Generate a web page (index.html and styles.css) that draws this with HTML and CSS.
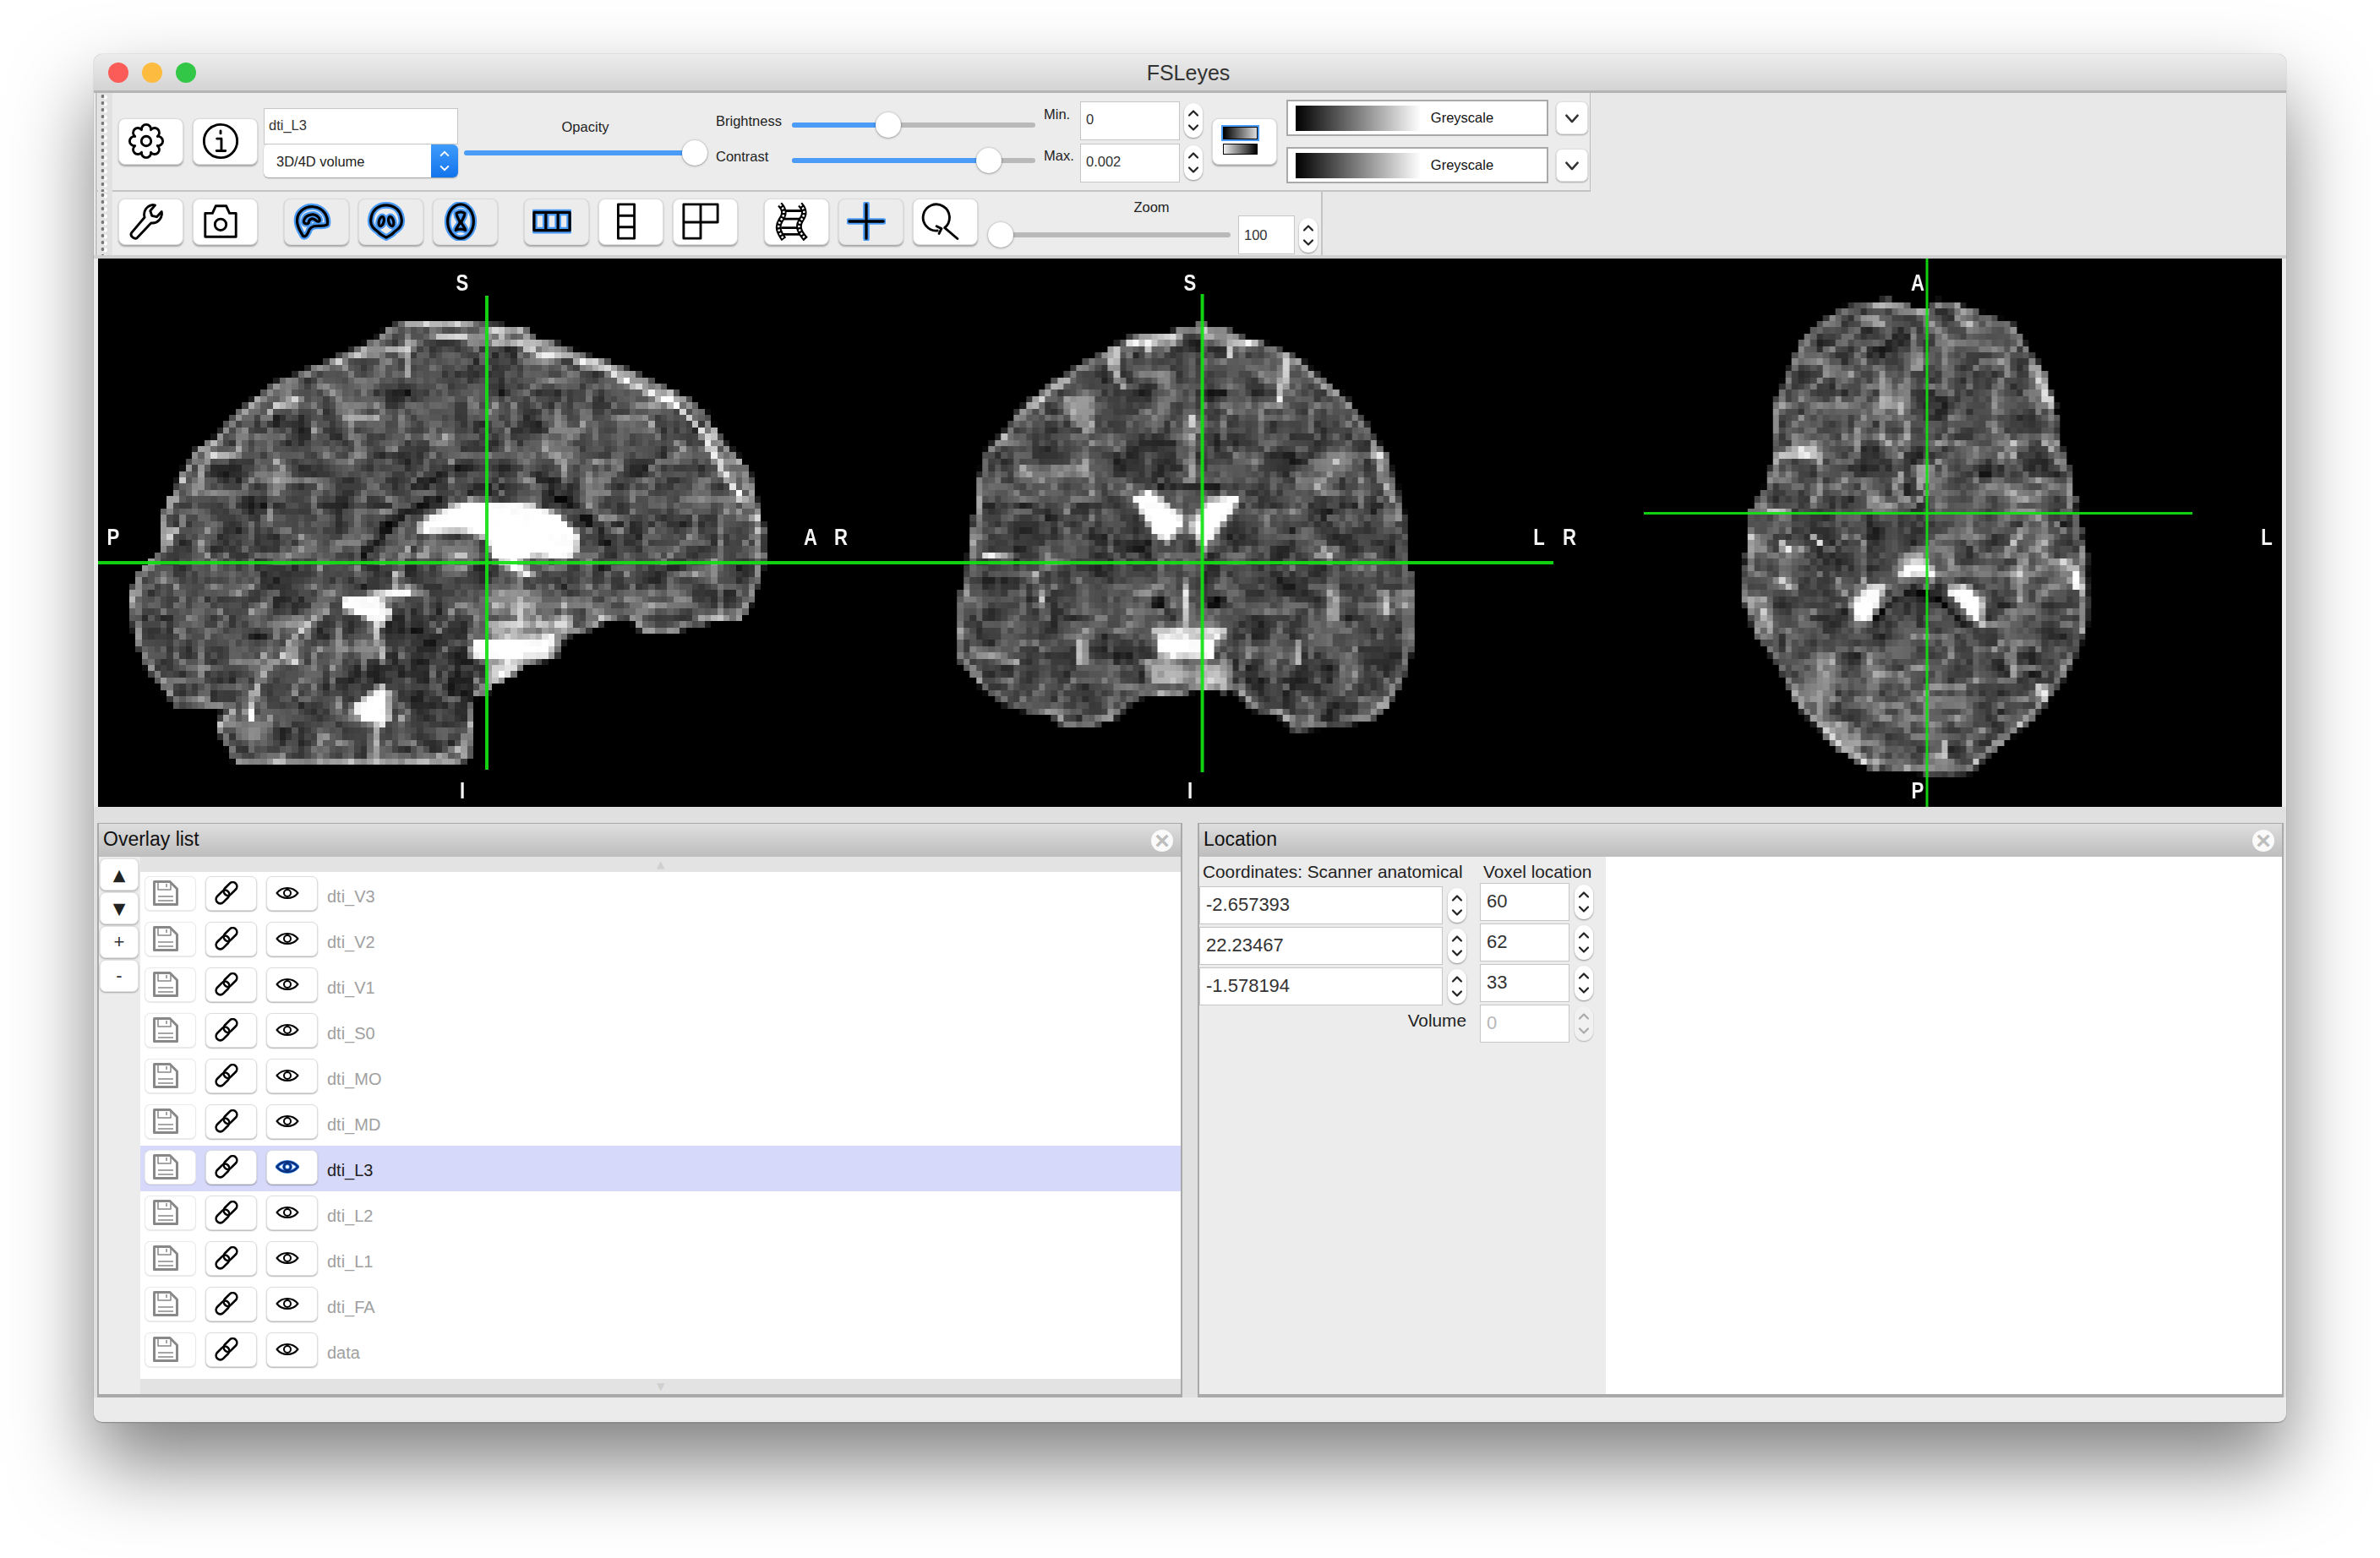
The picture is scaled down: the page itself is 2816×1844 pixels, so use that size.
FILE: index.html
```html
<!DOCTYPE html>
<html lang="en">

<head>
  <meta charset="UTF-8" />
  <title>FSLeyes</title>
  <link rel="stylesheet" href="styles.css">
</head>

<body>
  <!-- Icon sheet -->
  <svg class="sheet" xmlns="http://www.w3.org/2000/svg">
    <symbol id="i-gear" viewBox="0 0 48 48">
      <path d="M18.26 10.14 A5.8 5.8 0 1 1 29.74 10.14 A5.8 5.8 0 1 1 37.86 18.26 A5.8 5.8 0 1 1 37.86 29.74 A5.8 5.8 0 1 1 29.74 37.86 A5.8 5.8 0 1 1 18.26 37.86 A5.8 5.8 0 1 1 10.14 29.74 A5.8 5.8 0 1 1 10.14 18.26 A5.8 5.8 0 1 1 18.26 10.14 Z" />
      <circle cx="24" cy="24" r="6" />
    </symbol>
    <symbol id="i-info" viewBox="0 0 48 48">
      <circle cx="24" cy="24" r="20.5" />
      <path d="M24 11.5v3M19.5 21H25V35M19 36h11" />
    </symbol>
    <symbol id="i-wrench" viewBox="0 0 48 48">
      <path d="M6 38 L22 19 C20 12 24 5 32 3.5 L35 4 L29 11 L31 17 L37 18.5 L43 12 C44.5 20 38 27 30 26 L13 44 C10 47 3 42 6 38 Z" />
    </symbol>
    <symbol id="i-camera" viewBox="0 0 48 48">
      <path d="M5 14 H14 L18 5 H31 L35 14 H43 V43 H5 Z" />
      <circle cx="24" cy="28" r="7" />
    </symbol>
    <symbol id="i-sag" viewBox="0 0 48 48">
      <path d="M6 26 C4 12 16 5 26 6 C38 7 45 18 43 28 C36 32 26 26 21 34 C19 40 16 44 13 42 C11 38 7 33 6 26 Z" />
      <path d="M14 24 C15 16 27 12 33 20 C35 24 32 26 28 22 C24 19 20 22 20 26 C18 28 14 27 14 24 Z" />
    </symbol>
    <symbol id="i-cor" viewBox="0 0 48 48">
      <path d="M24 4 C34 4 42 10 43 22 C44 30 38 34 34 37 C32 40 28 42 24 44 C20 42 16 40 14 37 C10 34 4 30 5 22 C6 10 14 4 24 4 Z" />
      <ellipse cx="18" cy="24" rx="3" ry="6" transform="rotate(15 18 24)" />
      <ellipse cx="30" cy="24" rx="3" ry="6" transform="rotate(-15 30 24)" />
    </symbol>
    <symbol id="i-axi" viewBox="0 0 48 48">
      <ellipse cx="24" cy="24" rx="16" ry="21" />
      <path d="M19 14 C22 12 26 12 29 14 C29 20 25 22 25 25 C25 28 30 32 30 35 C26 33 22 33 18 35 C18 32 23 28 23 25 C23 22 19 20 19 14 Z" />
    </symbol>
    <symbol id="i-horz" viewBox="0 0 48 48">
      <path d="M2 13 H46 V35 H2 Z M16.500 13 V35 M31.500 13 V35" />
    </symbol>
    <symbol id="i-vert" viewBox="0 0 48 48">
      <path d="M14 3 H34 V45 H14 Z M14 17 H34 M14 31 H34" />
    </symbol>
    <symbol id="i-grid" viewBox="0 0 48 48">
      <path d="M3 3 H45 V25 H3 Z M24 3 V25 M3 25 V45 H24 V25" />
    </symbol>
    <symbol id="i-film" viewBox="0 0 48 48">
      <path d="M15 11 H37 M13 21 H36 M12 32 H33 M14 40 H36" />
      <path class="rail" d="M9 3 C16 10 15 16 10 23 C5 31 8 38 14 46 M34 3 C41 10 40 16 35 23 C30 31 34 38 41 46" />
      <path class="perf" d="M9 3 C16 10 15 16 10 23 C5 31 8 38 14 46 M34 3 C41 10 40 16 35 23 C30 31 34 38 41 46" />
    </symbol>
    <symbol id="i-plus" viewBox="0 0 48 48">
      <path d="M24 3 V45 M3 24 H45" />
    </symbol>
    <symbol id="i-zoom" viewBox="0 0 48 48">
      <path d="M29 31.8 A16.3 16.3 0 1 0 20 35.5 M19 30 L25 33 L22 39 M29 32 L44.7 45.4" />
    </symbol>
    <symbol id="i-save" viewBox="0 0 30 30">
      <path d="M1.500 1.500 H20 L28.500 10 V28.500 H1.500 Z" />
      <path class="thin" d="M6 2 V11 H21 V3 M16 4 V8 M6 19 H24 M6 24 H24" />
    </symbol>
    <symbol id="i-link" viewBox="0 0 28 28">
      <rect x="9.500" y="4" width="18" height="10" rx="5" transform="rotate(-45 18.500 9)" />
      <rect x="0.500" y="13.500" width="18" height="10" rx="5" transform="rotate(-45 9.500 18.500)" />
    </symbol>
    <symbol id="i-eye" viewBox="0 0 28 18">
      <path d="M1.500 9 C8 1 20 1 26.500 9 C20 17 8 17 1.500 9 Z" />
      <circle cx="14" cy="9" r="4" />
    </symbol>
    <symbol id="i-spin" viewBox="0 0 22 40">
      <path d="M6 14 L11 9 L16 14 M6 26 L11 31 L16 26" />
    </symbol>
    <symbol id="i-down" viewBox="0 0 24 24">
      <path d="M4 8 L12 17 L20 8" />
    </symbol>
  </svg>

  <div class="window">
    <header class="titlebar">
      <div class="lights">
        <span class="light red"></span>
        <span class="light amber"></span>
        <span class="light green"></span>
      </div>
      <div class="title">FSLeyes</div>
    </header>

    <div class="toolbars">
      <!-- Overlay display toolbar -->
      <div class="toolbar tb-display">
        <div class="grip"></div>
        <button class="tool first"><svg class="ico"><use href="#i-gear" /></svg></button>
        <button class="tool"><svg class="ico"><use href="#i-info" /></svg></button>
        <div class="name-col">
          <div class="field name">dti_L3</div>
          <div class="select">
            <span>3D/4D volume</span>
            <span class="select-arrows"><svg><use href="#i-spin" /></svg></span>
          </div>
        </div>
        <div class="opacity">
          <div class="caption">Opacity</div>
          <div class="slider w-opacity">
            <div class="track"><div class="fill" style="width: 100%"></div></div>
            <div class="thumb" style="left: 100%"></div>
          </div>
        </div>
        <div class="ranges">
          <div class="rlabel up">Brightness</div>
          <div class="slider lower1">
            <div class="track"><div class="fill" style="width: 39.6%"></div></div>
            <div class="thumb" style="left: 39.6%"></div>
          </div>
          <div class="rlabel minmax up2">Min.</div>
          <div class="field num">0</div>
          <div class="spin"><svg><use href="#i-spin" /></svg></div>

          <div class="rlabel dn">Contrast</div>
          <div class="slider raise1">
            <div class="track"><div class="fill" style="width: 81%"></div></div>
            <div class="thumb" style="left: 81%"></div>
          </div>
          <div class="rlabel minmax dn2">Max.</div>
          <div class="field num">0.002</div>
          <div class="spin"><svg><use href="#i-spin" /></svg></div>
        </div>
        <button class="tool invert">
          <span class="inv inv-a"></span>
          <span class="inv inv-b"></span>
        </button>
        <div class="cmaps">
          <div class="cmap"><span class="ramp"></span><span class="cmap-name">Greyscale</span></div>
          <div class="cmap"><span class="ramp"></span><span class="cmap-name">Greyscale</span></div>
        </div>
        <div class="drops">
          <button class="drop"><svg><use href="#i-down" /></svg></button>
          <button class="drop"><svg><use href="#i-down" /></svg></button>
        </div>
      </div>

      <!-- Ortho toolbar -->
      <div class="toolbar tb-ortho">
        <div class="grip"></div>
        <button class="tool first"><svg class="ico"><use href="#i-wrench" /></svg></button>
        <button class="tool"><svg class="ico"><use href="#i-camera" /></svg></button>
        <button class="tool on split"><svg class="ico glow"><use class="halo" href="#i-sag" /><use href="#i-sag" /></svg></button>
        <button class="tool on"><svg class="ico glow"><use class="halo" href="#i-cor" /><use href="#i-cor" /></svg></button>
        <button class="tool on"><svg class="ico glow"><use class="halo" href="#i-axi" /><use href="#i-axi" /></svg></button>
        <button class="tool on split"><svg class="ico glow"><use class="halo" href="#i-horz" /><use href="#i-horz" /></svg></button>
        <button class="tool"><svg class="ico"><use href="#i-vert" /></svg></button>
        <button class="tool"><svg class="ico"><use href="#i-grid" /></svg></button>
        <button class="tool split"><svg class="ico"><use href="#i-film" /></svg></button>
        <button class="tool on"><svg class="ico glow"><use class="halo" href="#i-plus" /><use href="#i-plus" /></svg></button>
        <button class="tool"><svg class="ico"><use href="#i-zoom" /></svg></button>
        <div class="zoom">
          <div class="caption">Zoom</div>
          <div class="zoom-row">
            <div class="slider w-zoom">
              <div class="track"></div>
              <div class="thumb" style="left: 0%"></div>
            </div>
            <div class="field zoom-val">100</div>
            <div class="spin"><svg><use href="#i-spin" /></svg></div>
          </div>
        </div>
      </div>
    </div>

    <!-- Ortho canvases -->
    <div class="ortho">
      <div class="view">
        <canvas id="sag" width="861" height="649"></canvas>
        <span class="lab lab-top">S</span>
        <span class="lab lab-bottom">I</span>
        <span class="lab lab-left">P</span>
        <span class="lab lab-right">A</span>
      </div>
      <div class="view">
        <canvas id="cor" width="861" height="649"></canvas>
        <span class="lab lab-top">S</span>
        <span class="lab lab-bottom">I</span>
        <span class="lab lab-left">R</span>
        <span class="lab lab-right">L</span>
      </div>
      <div class="view">
        <canvas id="axi" width="862" height="649"></canvas>
        <span class="lab lab-top">A</span>
        <span class="lab lab-bottom">P</span>
        <span class="lab lab-left">R</span>
        <span class="lab lab-right">L</span>
      </div>
    </div>

    <div class="panels">
      <section class="panel overlay-panel">
        <div class="panel-head"><span>Overlay list</span><span class="close">×</span></div>
        <div class="panel-body">
          <div class="list-side">
            <button class="side-btn arrow">▲</button>
            <button class="side-btn arrow">▼</button>
            <button class="side-btn">+</button>
            <button class="side-btn">-</button>
          </div>
          <div class="list">
            <div class="scroller">▲</div>
            <div class="rows">
              <div class="row">
                <button class="rb off"><svg class="save"><use href="#i-save" /></svg></button>
                <button class="rb"><svg class="link"><use href="#i-link" /></svg></button>
                <button class="rb"><svg class="eye"><use href="#i-eye" /></svg></button>
                <span class="row-name">dti_V3</span>
              </div>
              <div class="row">
                <button class="rb off"><svg class="save"><use href="#i-save" /></svg></button>
                <button class="rb"><svg class="link"><use href="#i-link" /></svg></button>
                <button class="rb"><svg class="eye"><use href="#i-eye" /></svg></button>
                <span class="row-name">dti_V2</span>
              </div>
              <div class="row">
                <button class="rb off"><svg class="save"><use href="#i-save" /></svg></button>
                <button class="rb"><svg class="link"><use href="#i-link" /></svg></button>
                <button class="rb"><svg class="eye"><use href="#i-eye" /></svg></button>
                <span class="row-name">dti_V1</span>
              </div>
              <div class="row">
                <button class="rb off"><svg class="save"><use href="#i-save" /></svg></button>
                <button class="rb"><svg class="link"><use href="#i-link" /></svg></button>
                <button class="rb"><svg class="eye"><use href="#i-eye" /></svg></button>
                <span class="row-name">dti_S0</span>
              </div>
              <div class="row">
                <button class="rb off"><svg class="save"><use href="#i-save" /></svg></button>
                <button class="rb"><svg class="link"><use href="#i-link" /></svg></button>
                <button class="rb"><svg class="eye"><use href="#i-eye" /></svg></button>
                <span class="row-name">dti_MO</span>
              </div>
              <div class="row">
                <button class="rb off"><svg class="save"><use href="#i-save" /></svg></button>
                <button class="rb"><svg class="link"><use href="#i-link" /></svg></button>
                <button class="rb"><svg class="eye"><use href="#i-eye" /></svg></button>
                <span class="row-name">dti_MD</span>
              </div>
              <div class="row selected">
                <button class="rb off"><svg class="save"><use href="#i-save" /></svg></button>
                <button class="rb"><svg class="link"><use href="#i-link" /></svg></button>
                <button class="rb"><svg class="eye glow"><use class="halo" href="#i-eye" /><use href="#i-eye" /></svg></button>
                <span class="row-name">dti_L3</span>
              </div>
              <div class="row">
                <button class="rb off"><svg class="save"><use href="#i-save" /></svg></button>
                <button class="rb"><svg class="link"><use href="#i-link" /></svg></button>
                <button class="rb"><svg class="eye"><use href="#i-eye" /></svg></button>
                <span class="row-name">dti_L2</span>
              </div>
              <div class="row">
                <button class="rb off"><svg class="save"><use href="#i-save" /></svg></button>
                <button class="rb"><svg class="link"><use href="#i-link" /></svg></button>
                <button class="rb"><svg class="eye"><use href="#i-eye" /></svg></button>
                <span class="row-name">dti_L1</span>
              </div>
              <div class="row">
                <button class="rb off"><svg class="save"><use href="#i-save" /></svg></button>
                <button class="rb"><svg class="link"><use href="#i-link" /></svg></button>
                <button class="rb"><svg class="eye"><use href="#i-eye" /></svg></button>
                <span class="row-name">dti_FA</span>
              </div>
              <div class="row">
                <button class="rb off"><svg class="save"><use href="#i-save" /></svg></button>
                <button class="rb"><svg class="link"><use href="#i-link" /></svg></button>
                <button class="rb"><svg class="eye"><use href="#i-eye" /></svg></button>
                <span class="row-name">data</span>
              </div>
            </div>
            <div class="scroller">▼</div>
          </div>
        </div>
      </section>

      <section class="panel location-panel">
        <div class="panel-head"><span>Location</span><span class="close">×</span></div>
        <div class="panel-body">
          <div class="loc-form">
            <div class="loc-world">
              <div class="loc-label">Coordinates: Scanner anatomical</div>
              <div class="loc-row"><div class="field wide">-2.657393</div><div class="spin"><svg><use href="#i-spin" /></svg></div></div>
              <div class="loc-row"><div class="field wide">22.23467</div><div class="spin"><svg><use href="#i-spin" /></svg></div></div>
              <div class="loc-row"><div class="field wide">-1.578194</div><div class="spin"><svg><use href="#i-spin" /></svg></div></div>
              <div class="loc-volume">Volume</div>
            </div>
            <div class="loc-voxel">
              <div class="loc-label">Voxel location</div>
              <div class="loc-row"><div class="field short">60</div><div class="spin"><svg><use href="#i-spin" /></svg></div></div>
              <div class="loc-row"><div class="field short">62</div><div class="spin"><svg><use href="#i-spin" /></svg></div></div>
              <div class="loc-row"><div class="field short">33</div><div class="spin"><svg><use href="#i-spin" /></svg></div></div>
              <div class="loc-row muted"><div class="field short">0</div><div class="spin"><svg><use href="#i-spin" /></svg></div></div>
            </div>
          </div>
        </div>
      </section>
    </div>

    <div class="statusbar"></div>
  </div>

  <script src="brain.js"></script>
</body>

</html>
```

FILE: styles.css
```css
* {
  margin: 0;
  padding: 0;
  box-sizing: border-box;
}

body {
  background: #fff;
  font-family: "Liberation Sans", Arial, sans-serif;
  color: #222;
  padding: 64px 111px;
  width: 2816px;
  height: 1844px;
  overflow: hidden;
}

button {
  font-family: inherit;
  cursor: pointer;
}

.sheet {
  position: absolute;
  width: 0;
  height: 0;
}

.window {
  width: 2594px;
  height: 1620px;
  display: flex;
  flex-direction: column;
  background: #ececec;
  border-radius: 10px;
  box-shadow:
    0 0 1px rgba(0, 0, 0, 0.6),
    0 48px 95px rgba(0, 0, 0, 0.5);
}

/* Title bar */
.titlebar {
  height: 46px;
  display: grid;
  grid-template-columns: 1fr auto 1fr;
  align-items: center;
  background: linear-gradient(#ececec, #d4d4d4);
  border-bottom: 3px solid #b4b4b4;
  border-radius: 10px 10px 0 0;
}

.lights {
  display: flex;
  gap: 16px;
  padding-left: 17px;
}

.light {
  width: 24px;
  height: 24px;
  border-radius: 50%;
}

.red { background: #fc5c57; }
.amber { background: #fdbc3f; }
.green { background: #33c748; }

.title {
  font-size: 25px;
  color: #333;
  padding-top: 2px;
  margin-left: -4px;
}

/* Toolbars */
.toolbars {
  height: 196px;
  padding-left: 2px;
  background: #e8e8e8;
  border-bottom: 4px solid #cfcfcf;
}

.toolbar {
  display: flex;
  align-items: center;
  background: #ececec;
  padding-left: 1px;
  border-left: 2px solid #c4c4c4;
}

.tb-display {
  width: 1769px;
  height: 115px;
  margin-bottom: 2px;
  border-right: 1px solid #bbb;
  box-shadow: 0 2px 0 #c4c4c4;
}

.tb-ortho {
  width: 1452px;
  height: 75px;
  border-right: 2px solid #c4c4c4;
  padding-bottom: 4px;
}

.grip {
  width: 17px;
  align-self: stretch;
  margin-bottom: -4px;
  background-color: #e2e2e2;
  background-image:
    radial-gradient(#777 1.5px, transparent 2.2px),
    radial-gradient(#fff 2px, transparent 2.6px);
  background-size: 7px 8px, 7px 8px;
  background-position: 2px 8px, 5px 9px;
  background-repeat: repeat-y;
}

.tool {
  width: 77px;
  height: 55px;
  display: flex;
  align-items: center;
  justify-content: center;
  padding: 0 11px 2px 0;
  background: #fff;
  border: 1px solid #dcdcdc;
  border-radius: 8px;
  box-shadow: 0 1.5px 2px rgba(0, 0, 0, 0.3);
  margin-left: 11px;
  flex: none;
}

.tool.first {
  margin-left: 7px;
}

.tool.on {
  background: #ececec;
}

.tool.split {
  margin-left: 31px;
}

.ico {
  width: 46px;
  height: 46px;
  fill: none;
  stroke: #000;
  stroke-width: 3;
  stroke-linejoin: round;
  stroke-linecap: round;
  flex: none;
}

.glow {
  stroke-width: 3.4;
}

.halo {
  stroke: #4a9bf6;
  stroke-width: 8;
}

.rail {
  stroke-width: 7;
  stroke-linecap: butt;
}

.perf {
  stroke: #fff;
  stroke-width: 2.6;
  stroke-dasharray: 2.4 2.4;
  stroke-linecap: butt;
}

.field {
  display: flex;
  align-items: center;
  background: #fff;
  border: 1.5px solid #c6c6c6;
  color: #333;
}

.name-col {
  width: 230px;
  margin-left: 7px;
  flex: none;
  padding-top: 2px;
}

.name {
  height: 43px;
  font-size: 16.5px;
  padding-left: 5px;
  padding-bottom: 2px;
}

.select {
  height: 39px;
  display: flex;
  align-items: center;
  justify-content: space-between;
  background: #fff;
  border-radius: 6px;
  box-shadow: 0 1px 1.5px rgba(0, 0, 0, 0.35);
  font-size: 16.5px;
  padding: 2px 0 0 15px;
  overflow: hidden;
}

.select-arrows {
  width: 32px;
  height: 39px;
  margin-top: -2px;
  background: linear-gradient(#3f9cfb, #1273ec);
}

.select-arrows svg {
  width: 32px;
  height: 39px;
  fill: none;
  stroke: #fff;
  stroke-width: 2;
}

.caption {
  font-size: 16.5px;
  line-height: 20px;
  text-align: center;
  color: #222;
}

.opacity {
  width: 273px;
  margin-left: 7px;
  flex: none;
  display: flex;
  flex-direction: column;
  gap: 6px;
}

.opacity .caption {
  padding-left: 14px;
}

.slider {
  position: relative;
  height: 30px;
}

.track {
  position: absolute;
  top: 12px;
  left: 0;
  right: 0;
  height: 6px;
  border-radius: 3px;
  background: #b9b9b9;
  overflow: hidden;
}

.fill {
  height: 100%;
  background: #4a9cf8;
}

.thumb {
  position: absolute;
  top: 0;
  width: 30px;
  height: 30px;
  margin-left: -15px;
  border-radius: 50%;
  background: #fff;
  box-shadow: 0 0.5px 2.5px rgba(0, 0, 0, 0.5);
}

.ranges {
  display: grid;
  grid-template-columns: 90px 288px 53px 118px 29px;
  grid-template-rows: 46px 46px;
  row-gap: 4px;
  margin-left: 25px;
  flex: none;
  align-items: center;
}

.rlabel {
  font-size: 16.5px;
  line-height: 20px;
}

.rlabel.dn {
  margin-top: -16px;
}

.rlabel.up2 {
  margin-top: -16px;
}

.rlabel.dn2 {
  margin-top: -18px;
}

.minmax {
  padding-left: 10px;
}

.lower1 {
  margin-top: 10px;
}

.raise1 {
  margin-top: -6px;
}

.num {
  height: 46px;
  font-size: 16.5px;
  padding-left: 6px;
  padding-bottom: 2px;
  align-self: stretch;
}

.spin {
  width: 22px;
  height: 41px;
  margin-left: 5px;
  background: #fff;
  border-radius: 11px;
  box-shadow: 0 1px 2px rgba(0, 0, 0, 0.4);
  flex: none;
}

.spin svg {
  display: block;
  width: 22px;
  height: 41px;
  fill: none;
  stroke: #222;
  stroke-width: 2.2;
  stroke-linecap: round;
  stroke-linejoin: round;
}

.invert {
  margin-left: 9px;
  flex-direction: column;
  gap: 5px;
}

.inv {
  display: block;
  width: 41px;
}

.inv-a {
  height: 15px;
  background: linear-gradient(90deg, #000, #ddd);
  border: 1px solid #000;
  outline: 2px solid #4a9bf6;
}

.inv-b {
  height: 13px;
  background: linear-gradient(90deg, #eee, #000);
  border: 1px solid #000;
}

.cmaps {
  width: 310px;
  margin-left: 11px;
  flex: none;
  display: flex;
  flex-direction: column;
  gap: 13px;
}

.cmap {
  height: 43px;
  display: flex;
  align-items: center;
  background: #fff;
  border: 2px solid #a9a9a9;
  padding-left: 9px;
}

.ramp {
  width: 148px;
  height: 30px;
  background: linear-gradient(90deg, #000, #fff);
  flex: none;
}

.cmap-name {
  flex: 1;
  text-align: center;
  font-size: 16.5px;
  color: #111;
  padding-right: 51px;
}

.drops {
  margin-left: 9px;
  flex: none;
  display: flex;
  flex-direction: column;
  gap: 17px;
}

.drop {
  width: 38px;
  height: 39px;
  display: flex;
  align-items: center;
  justify-content: center;
  background: #fff;
  border: 1px solid #e0e0e0;
  border-radius: 7px;
  box-shadow: 0 1px 2px rgba(0, 0, 0, 0.3);
}

.drop svg {
  width: 20px;
  height: 20px;
  fill: none;
  stroke: #333;
  stroke-width: 3;
  stroke-linecap: round;
  stroke-linejoin: round;
}

.zoom {
  margin-left: 12px;
  width: 391px;
  flex: none;
  align-self: stretch;
  padding-top: 8px;
}

.zoom .caption {
  padding-right: 4px;
}

.zoom-row {
  display: flex;
  align-items: center;
}

.w-zoom {
  width: 272px;
  margin-left: 15px;
  margin-right: 9px;
  flex: none;
}

.zoom-val {
  width: 67px;
  height: 46px;
  font-size: 16.5px;
  padding-left: 6px;
  flex: none;
}

/* Ortho canvases */
.ortho {
  height: 649px;
  display: flex;
  margin: 0 5px;
  background: #000;
}

.view {
  position: relative;
  flex: 1;
}

.view canvas {
  display: block;
  width: 100%;
  height: 100%;
}

.lab {
  position: absolute;
  font-size: 27px;
  font-weight: bold;
  line-height: 30px;
  color: #f4f4f4;
  transform: translate(-50%, -50%) scaleX(0.82);
}

.lab-top { left: 50%; top: 29px; }
.lab-bottom { left: 50%; top: 630px; }
.lab-left { left: 18px; top: 330px; }
.lab-right { left: calc(100% - 18px); top: 330px; }

/* Bottom panels */
.panels {
  height: 699px;
  display: flex;
  gap: 18px;
  padding: 19px 3px 0 4px;
  background: #e0e0e0;
}

.panel {
  display: flex;
  flex-direction: column;
  border: 2px solid #a9a9a9;
  border-top-width: 1px;
  border-bottom-width: 4px;
  background: #ececec;
}

.overlay-panel {
  width: 1284px;
  flex: none;
}

.location-panel {
  flex: 1;
}

.panel-head {
  height: 39px;
  display: flex;
  align-items: center;
  justify-content: space-between;
  padding: 0 9px 2px 5px;
  background: linear-gradient(#dedede, #bdbdbd);
  font-size: 23px;
  color: #111;
  flex: none;
}

.close {
  width: 26px;
  height: 26px;
  display: flex;
  align-items: center;
  justify-content: center;
  border-radius: 50%;
  background: #fafafa;
  color: #bdbdbd;
  font-size: 30px;
  font-weight: bold;
  line-height: 26px;
  margin-top: 2px;
}

.panel-body {
  flex: 1;
  display: flex;
}

.list-side {
  width: 49px;
  flex: none;
  display: flex;
  flex-direction: column;
  gap: 2px;
  padding: 2px 0 0 1px;
}

.side-btn {
  width: 46px;
  height: 38px;
  display: flex;
  align-items: center;
  justify-content: center;
  background: #fff;
  border: 1px solid #e2e2e2;
  border-radius: 7px;
  box-shadow: 0 1px 2px rgba(0, 0, 0, 0.3);
  font-size: 22px;
  color: #333;
}

.side-btn.arrow {
  font-family: "DejaVu Sans", sans-serif;
  font-size: 19px;
  color: #222;
}

.list {
  flex: 1;
  display: flex;
  flex-direction: column;
}

.scroller {
  height: 18px;
  line-height: 18px;
  background: #e3e3e3;
  color: #cfcfcf;
  font-family: "DejaVu Sans", sans-serif;
  font-size: 12px;
  text-align: center;
  flex: none;
}

.rows {
  flex: 1;
  background: #fff;
}

.row {
  height: 54px;
  display: flex;
  align-items: flex-start;
  padding: 5px 0 0 5px;
  gap: 11px;
}

.row.selected {
  background: #d7d9fa;
}

.rb {
  width: 61px;
  height: 41px;
  display: flex;
  justify-content: flex-start;
  background: #fff;
  border: 1px solid #ddd;
  border-radius: 7px;
  box-shadow: 0 1px 1.5px rgba(0, 0, 0, 0.3);
  flex: none;
}

.rb.off {
  box-shadow: 0 0.5px 1px rgba(0, 0, 0, 0.1);
  border-color: #eaeaea;
}

.rb svg {
  fill: none;
  stroke: #000;
  stroke-linejoin: round;
}

.save {
  width: 30px;
  height: 30px;
  margin: 4px 0 0 9px;
  stroke: #888 !important;
  stroke-width: 3;
}

.thin {
  stroke-width: 1.5;
}

.link {
  width: 28px;
  height: 28px;
  margin: 5px 0 0 10px;
  stroke-width: 2.6;
}

.eye {
  width: 28px;
  height: 18px;
  margin: 10px 0 0 10px;
  stroke-width: 2;
}

.eye.glow {
  stroke: #0c2f7c !important;
  stroke-width: 2.4;
}

.eye .halo {
  stroke: #3e8ff0;
  stroke-width: 4;
}

.row-name {
  font-size: 20px;
  color: #a0a0a0;
  line-height: 54px;
  margin-top: -3px;
}

.selected .row-name {
  color: #222;
}

.location-panel .panel-body {
  background: #fff;
}

.loc-form {
  width: 481px;
  display: flex;
  background: #ececec;
  font-size: 20.8px;
  color: #222;
}

.loc-world {
  width: 318px;
  flex: none;
  padding-top: 6px;
}

.loc-voxel {
  margin-left: 14px;
  padding-top: 6px;
}

.loc-label {
  line-height: 24px;
  padding-left: 4px;
  white-space: nowrap;
}

.loc-world .loc-label {
  margin-bottom: 5px;
}

.loc-voxel .loc-label {
  margin-bottom: 1px;
}

.loc-row {
  display: flex;
  align-items: center;
  margin-bottom: 3px;
}

.field.wide {
  width: 288px;
  height: 45px;
  font-size: 22px;
  padding-left: 7px;
  padding-bottom: 2px;
}

.field.short {
  width: 106px;
  height: 45px;
  font-size: 22px;
  padding-left: 7px;
  padding-bottom: 2px;
}

.loc-row .spin {
  margin-left: 6px;
}

.muted .field {
  color: #b8b8b8;
}

.muted .spin {
  background: #f1f1f1;
  box-shadow: 0 1px 1.5px rgba(0, 0, 0, 0.25);
}

.muted .spin svg {
  stroke: #aaa;
}

.loc-volume {
  line-height: 24px;
  text-align: right;
  width: 316px;
  margin-top: 6px;
}

.statusbar {
  height: 30px;
  background: #ebebeb;
  border-radius: 0 0 10px 10px;
  border-bottom: 1px solid #8c8c8c;
}
```

FILE: brain.js
```javascript
// Synthetic voxel slices for the three ortho views.
// Points are [x, y] in the picture, mapped through each view's offset and scale.
const VOXEL = 7.4;

function hash(x, y) {
  const s = Math.sin(x * 127.1 + y * 311.7) * 43758.5453;
  return s - Math.floor(s);
}

function valueNoise(x, y) {
  const ix = Math.floor(x), iy = Math.floor(y);
  const fx = x - ix, fy = y - iy;
  const a = hash(ix, iy), b = hash(ix + 1, iy);
  const c = hash(ix, iy + 1), d = hash(ix + 1, iy + 1);
  const top = a + (b - a) * fx;
  const bottom = c + (d - c) * fx;
  return top + (bottom - top) * fy;
}

function drawSlice(cfg) {
  const canvas = document.getElementById(cfg.id);
  const ctx = canvas.getContext("2d");
  const w = Math.ceil(canvas.width / VOXEL);
  const h = Math.ceil(canvas.height / VOXEL);

  const low = document.createElement("canvas");
  low.width = w;
  low.height = h;
  const g = low.getContext("2d", { willReadFrequently: true });

  const mapX = (x) => (x / cfg.sx + cfg.ox) / VOXEL;
  const mapY = (y) => (y / 2.376 - 6) / VOXEL;

  function trace(pts) {
    g.beginPath();
    pts.forEach((p, i) => {
      if (i === 0) g.moveTo(mapX(p[0]), mapY(p[1]));
      else g.lineTo(mapX(p[0]), mapY(p[1]));
    });
  }

  g.fillStyle = "#000";
  g.fillRect(0, 0, w, h);
  g.save();
  trace(cfg.outline);
  g.closePath();
  g.clip();
  g.fillStyle = cfg.base;
  g.fillRect(0, 0, w, h);

  g.lineCap = "round";
  g.lineJoin = "round";
  trace(cfg.outline);
  g.closePath();
  g.strokeStyle = cfg.rim;
  g.lineWidth = 1.6;
  g.stroke();

  cfg.marks.forEach((m) => {
    trace(m.p);
    if (m.w) {
      g.strokeStyle = m.c;
      g.lineWidth = m.w / VOXEL;
      g.stroke();
    } else {
      g.closePath();
      g.fillStyle = m.c;
      g.fill();
    }
  });
  g.restore();

  const img = g.getImageData(0, 0, w, h);
  const seed = cfg.seed;
  for (let y = 0; y < h; y++) {
    for (let x = 0; x < w; x++) {
      const i = (y * w + x) * 4;
      let v = img.data[i];
      if (v === 0) continue;
      const n = valueNoise(x / 3.2 + seed, y / 2.6 + seed) * 0.6 + valueNoise(x / 1.4 + seed, y / 1.4) * 0.4;
      const grain = hash(x + seed, y - seed) - 0.5;
      // thin bright folds where the noise crosses its midpoint
      const ridge = 1 - Math.abs(2 * valueNoise(x / 3.6 - seed, y / 3 + 40) - 1);
      const fold = Math.pow(ridge, 7);
      const keep = v > 225 ? 0.25 : 1;
      v = v + ((n - 0.5) * 100 + grain * 30 + fold * cfg.fold) * keep;
      v = Math.max(6, Math.min(255, v));
      img.data[i] = img.data[i + 1] = img.data[i + 2] = v;
    }
  }
  g.putImageData(img, 0, 0);

  ctx.imageSmoothingEnabled = false;
  ctx.drawImage(low, 0, 0, w * VOXEL, h * VOXEL);

  ctx.fillStyle = "rgba(18, 226, 18, 0.92)";
  ctx.fillRect(cfg.hline[0], cfg.hline[1] - 2, cfg.hline[2] - cfg.hline[0], cfg.hline[3]);
  ctx.fillRect(cfg.vline[0] - 2, cfg.vline[1], cfg.vline[3], cfg.vline[2] - cfg.vline[1]);
}

drawSlice({
  id: "sag",
  seed: 3,
  fold: 70,
  sx: 1.742,
  ox: 100 - 116,
  base: "#444",
  rim: "#a0a0a0",
  hline: [0, 360, 861, 4],
  vline: [460, 44, 605, 4],
  outline: [[665, 190], [790, 188], [830, 205], [905, 210], [925, 240], [1000, 270], [1060, 300], [1130, 335], [1190, 375], [1240, 410], [1280, 450], [1305, 510], [1335, 560], [1370, 610], [1385, 700], [1398, 770], [1398, 870], [1380, 965], [1355, 1020], [1250, 1045], [1210, 1068], [1150, 1065], [1125, 1020], [1075, 1030], [1030, 1065], [990, 1075], [970, 1135], [905, 1155], [880, 1190], [840, 1205], [830, 1230], [800, 1250], [800, 1340], [790, 1420], [760, 1440], [315, 1440], [300, 1400], [275, 1345], [275, 1315], [300, 1290], [250, 1270], [185, 1270], [160, 1215], [130, 1170], [105, 1080], [95, 970], [110, 900], [160, 830], [160, 740], [185, 670], [210, 600], [235, 545], [270, 525], [290, 485], [325, 435], [400, 360], [440, 340], [530, 290], [600, 245], [635, 205]],
  marks: [
    { c: "#303030", p: [[640, 1030], [800, 1040], [800, 1270], [660, 1290], [640, 1160]] },
    { c: "#161616", w: 12, p: [[570, 850], [640, 750], [740, 680], [850, 660], [980, 685], [1060, 765], [1085, 850]] },
    { c: "#262626", w: 8, p: [[690, 640], [780, 605], [900, 612], [1010, 660]] },
    { c: "#2e2e2e", w: 10, p: [[560, 860], [620, 900], [640, 880]] },
    { c: "#fff", p: [[680, 770], [720, 730], [780, 700], [900, 700], [970, 725], [1020, 790], [1015, 840], [1000, 860], [930, 850], [890, 875], [840, 860], [825, 800], [780, 780], [700, 790]] },
    { c: "#fff", w: 10, p: [[880, 880], [915, 900]] },
    { c: "#6a6a6a", p: [[700, 810], [820, 810], [825, 860], [680, 860]] },
    { c: "#fff", w: 7, p: [[1010, 298], [1070, 320], [1130, 370], [1215, 420], [1270, 490], [1300, 570], [1320, 620], [1360, 700]] },
    { c: "#fff", w: 5, p: [[560, 285], [660, 265], [680, 258]] },
    { c: "#fff", w: 6, p: [[725, 232], [800, 240], [895, 250], [940, 285], [1000, 285]] },
    { c: "#e8e8e8", w: 5, p: [[665, 270], [665, 345]] },
    { c: "#fff", w: 5, p: [[440, 410], [390, 430], [380, 460]] },
    { c: "#ccc", w: 6, p: [[325, 490], [320, 560], [250, 575], [230, 670]] },
    { c: "#c4c4c4", w: 6, p: [[180, 780], [170, 830]] },
    { c: "#888", w: 3, p: [[470, 490], [545, 570], [640, 590]] },
    { c: "#888", w: 3, p: [[220, 670], [440, 680]] },
    { c: "#999", w: 4, p: [[530, 470], [600, 458]] },
    { c: "#888", w: 3, p: [[1040, 450], [1060, 560]] },
    { c: "#999", w: 4, p: [[1170, 600], [1230, 580]] },
    { c: "#b8b8b8", w: 6, p: [[670, 820], [650, 870], [640, 940]] },
    { c: "#fff", w: 10, p: [[540, 980], [670, 950]] },
    { c: "#fff", p: [[530, 970], [600, 965], [640, 1010], [610, 1050], [570, 1020], [530, 1000]] },
    { c: "#f0f0f0", w: 6, p: [[600, 1040], [615, 1140]] },
    { c: "#e0e0e0", w: 5, p: [[500, 1000], [430, 1080], [410, 1130], [370, 1170], [340, 1290]] },
    { c: "#fff", w: 6, p: [[410, 1135], [440, 1145]] },
    { c: "#fff", w: 9, p: [[340, 1280], [345, 1310]] },
    { c: "#fff", p: [[620, 1210], [630, 1300], [610, 1340], [545, 1280], [590, 1235]] },
    { c: "#d8d8d8", w: 7, p: [[600, 1320], [595, 1440]] },
    { c: "#bbb", w: 7, p: [[720, 1420], [770, 1395]] },
    { c: "#a8a8a8", w: 4, p: [[490, 1360], [495, 1430]] },
    { c: "#a8a8a8", p: [[830, 1035], [1010, 1020], [1000, 1060], [830, 1065]] },
    { c: "#777", p: [[840, 960], [1050, 960], [1050, 1000], [840, 1010]] },
    { c: "#fff", p: [[800, 1085], [975, 1070], [960, 1130], [830, 1150], [790, 1130]] },
    { c: "#c0c0c0", p: [[830, 1150], [905, 1140], [880, 1190], [830, 1205]] }
  ]
});

drawSlice({
  id: "cor",
  seed: 11,
  fold: 60,
  sx: 1.96,
  ox: 1100 - 977,
  base: "#424242",
  rim: "#8a8a8a",
  hline: [0, 360, 860, 4],
  vline: [445, 42, 608, 4],
  outline: [[620, 205], [690, 210], [720, 240], [790, 260], [850, 295], [900, 350], [960, 405], [1010, 480], [1040, 540], [1065, 600], [1085, 680], [1100, 760], [1100, 870], [1115, 900], [1115, 1100], [1100, 1180], [1060, 1270], [1020, 1310], [920, 1330], [840, 1345], [820, 1300], [750, 1280], [710, 1230], [640, 1225], [610, 1225], [590, 1240], [500, 1240], [470, 1260], [440, 1295], [380, 1330], [310, 1330], [295, 1300], [200, 1280], [130, 1230], [90, 1170], [65, 1140], [65, 1000], [85, 920], [90, 860], [105, 760], [110, 660], [130, 560], [170, 510], [210, 440], [270, 380], [340, 320], [420, 270], [470, 240], [560, 225]],
  marks: [
    { c: "#2a2a2a", w: 6, p: [[400, 340], [440, 620]] },
    { c: "#2a2a2a", w: 6, p: [[760, 340], [740, 600]] },
    { c: "#2a2a2a", w: 5, p: [[510, 330], [530, 620]] },
    { c: "#2a2a2a", w: 5, p: [[690, 330], [660, 620]] },
    { c: "#252525", w: 8, p: [[200, 700], [400, 800], [560, 840]] },
    { c: "#252525", w: 8, p: [[980, 700], [800, 800], [650, 840]] },
    { c: "#8a8a8a", p: [[310, 400], [380, 390], [380, 510], [330, 480]] },
    { c: "#777", p: [[830, 620], [900, 570], [1000, 560], [920, 680], [860, 670]] },
    { c: "#6c6c6c", p: [[190, 600], [370, 590], [360, 630], [200, 630]] },
    { c: "#151515", w: 9, p: [[510, 655], [700, 655]] },
    { c: "#fff", p: [[470, 685], [510, 665], [570, 720], [590, 760], [550, 820], [520, 790]] },
    { c: "#fff", p: [[640, 690], [725, 680], [700, 730], [630, 840], [610, 760]] },
    { c: "#f0f0f0", w: 5, p: [[600, 740], [620, 800]] },
    { c: "#999", w: 6, p: [[600, 280], [605, 640]] },
    { c: "#fff", w: 5, p: [[605, 460], [610, 480]] },
    { c: "#fff", w: 5, p: [[592, 930], [595, 1040]] },
    { c: "#aaa", p: [[495, 1150], [700, 1150], [700, 1205], [510, 1210]] },
    { c: "#bbb", p: [[510, 1050], [690, 1050], [680, 1090], [520, 1080]] },
    { c: "#fff", p: [[525, 1075], [660, 1085], [660, 1140], [525, 1130]] },
    { c: "#fff", w: 6, p: [[430, 275], [425, 330], [450, 375]] },
    { c: "#fff", w: 6, p: [[460, 245], [570, 240]] },
    { c: "#fff", w: 6, p: [[640, 240], [750, 245]] },
    { c: "#fff", w: 5, p: [[505, 245], [505, 280]] },
    { c: "#fff", w: 5, p: [[700, 250], [695, 285]] },
    { c: "#fff", w: 6, p: [[825, 295], [810, 420]] },
    { c: "#e8e8e8", w: 5, p: [[905, 360], [940, 395]] },
    { c: "#e0e0e0", w: 5, p: [[225, 440], [340, 340]] },
    { c: "#ddd", w: 5, p: [[1030, 540], [1050, 640], [1075, 700]] },
    { c: "#fff", w: 6, p: [[125, 848], [185, 855]] },
    { c: "#eee", w: 4, p: [[245, 900], [270, 1030]] },
    { c: "#ddd", w: 4, p: [[905, 810], [935, 880], [930, 1030]] },
    { c: "#eee", w: 7, p: [[350, 1090], [350, 1155]] },
    { c: "#fff", w: 7, p: [[850, 1100], [850, 1150]] },
    { c: "#aaa", w: 8, p: [[95, 1120], [200, 1150]] },
    { c: "#aaa", w: 8, p: [[1050, 950], [1060, 1010]] },
    { c: "#050505", p: [[510, 970], [545, 970], [545, 1000], [510, 1000]] },
    { c: "#050505", p: [[650, 965], [705, 965], [705, 1000], [650, 1000]] }
  ]
});

drawSlice({
  id: "axi",
  seed: 23,
  fold: 80,
  sx: 1.912,
  ox: 1900 - 1838,
  base: "#444",
  rim: "#909090",
  hline: [106, 302, 756, 3],
  vline: [442, 0, 649, 3],
  outline: [[545, 150], [640, 135], [700, 160], [730, 155], [750, 135], [820, 155], [920, 205], [950, 260], [985, 330], [1015, 430], [1020, 520], [1050, 610], [1060, 720], [1085, 850], [1085, 1050], [1060, 1130], [1020, 1220], [960, 1310], [880, 1390], [820, 1460], [740, 1460], [660, 1450], [580, 1440], [520, 1380], [440, 1280], [385, 1150], [340, 1070], [310, 960], [325, 790], [330, 720], [365, 650], [380, 570], [380, 440], [410, 340], [440, 250], [490, 190]],
  marks: [
    { c: "#2a2a2a", w: 7, p: [[540, 560], [600, 720], [600, 880]] },
    { c: "#2a2a2a", w: 7, p: [[880, 560], [830, 720], [820, 880]] },
    { c: "#262626", w: 7, p: [[420, 980], [540, 1000]] },
    { c: "#262626", w: 7, p: [[890, 990], [1020, 990]] },
    { c: "#ccc", w: 5, p: [[697, 220], [705, 320]] },
    { c: "#111", w: 6, p: [[700, 170], [705, 225]] },
    { c: "#bbb", w: 6, p: [[570, 180], [610, 190]] },
    { c: "#bbb", w: 6, p: [[790, 180], [830, 210]] },
    { c: "#aaa", w: 4, p: [[590, 480], [665, 570]] },
    { c: "#c4c4c4", w: 4, p: [[790, 490], [735, 560]] },
    { c: "#eee", w: 5, p: [[665, 620], [655, 670], [690, 705], [735, 670], [720, 590]] },
    { c: "#fff", w: 5, p: [[705, 600], [710, 660]] },
    { c: "#ccc", p: [[705, 830], [650, 915], [755, 915]] },
    { c: "#0c0c0c", w: 7, p: [[610, 1030], [650, 965], [700, 945], [760, 980], [810, 1050]] },
    { c: "#fff", p: [[555, 985], [590, 935], [635, 935], [595, 1040], [565, 1040]] },
    { c: "#fff", p: [[770, 945], [815, 930], [850, 975], [852, 1050], [820, 1020]] },
    { c: "#0a0a0a", w: 4, p: [[710, 1010], [710, 1070]] },
    { c: "#fff", w: 6, p: [[385, 570], [460, 560]] },
    { c: "#fff", w: 5, p: [[360, 722], [410, 730]] },
    { c: "#ddd", w: 4, p: [[395, 560], [470, 540], [490, 620], [470, 700]] },
    { c: "#fff", w: 7, p: [[470, 800], [490, 820]] },
    { c: "#ddd", w: 8, p: [[395, 815], [420, 840]] },
    { c: "#fff", w: 8, p: [[985, 1220], [992, 1245]] },
    { c: "#fff", w: 6, p: [[1030, 870], [1062, 885], [1064, 940]] },
    { c: "#eee", w: 5, p: [[990, 520], [1030, 600]] },
    { c: "#eee", w: 4, p: [[965, 320], [1005, 430]] },
    { c: "#ddd", w: 6, p: [[905, 850], [945, 770]] },
    { c: "#bbb", w: 5, p: [[925, 940], [945, 850], [1010, 800]] },
    { c: "#aaa", w: 4, p: [[860, 470], [920, 530], [910, 620]] },
    { c: "#bbb", w: 5, p: [[910, 1130], [920, 1180], [980, 1160]] },
    { c: "#999", w: 4, p: [[430, 1150], [510, 1140]] },
    { c: "#ccc", w: 5, p: [[530, 1330], [535, 1350]] },
    { c: "#eee", w: 8, p: [[765, 1380], [760, 1420]] },
    { c: "#b8b8b8", w: 5, p: [[340, 900], [420, 930]] },
    { c: "#ccc", w: 5, p: [[350, 1000], [380, 1090]] },
    { c: "#888", p: [[620, 390], [690, 380], [680, 440], [630, 440]] }
  ]
});
```
